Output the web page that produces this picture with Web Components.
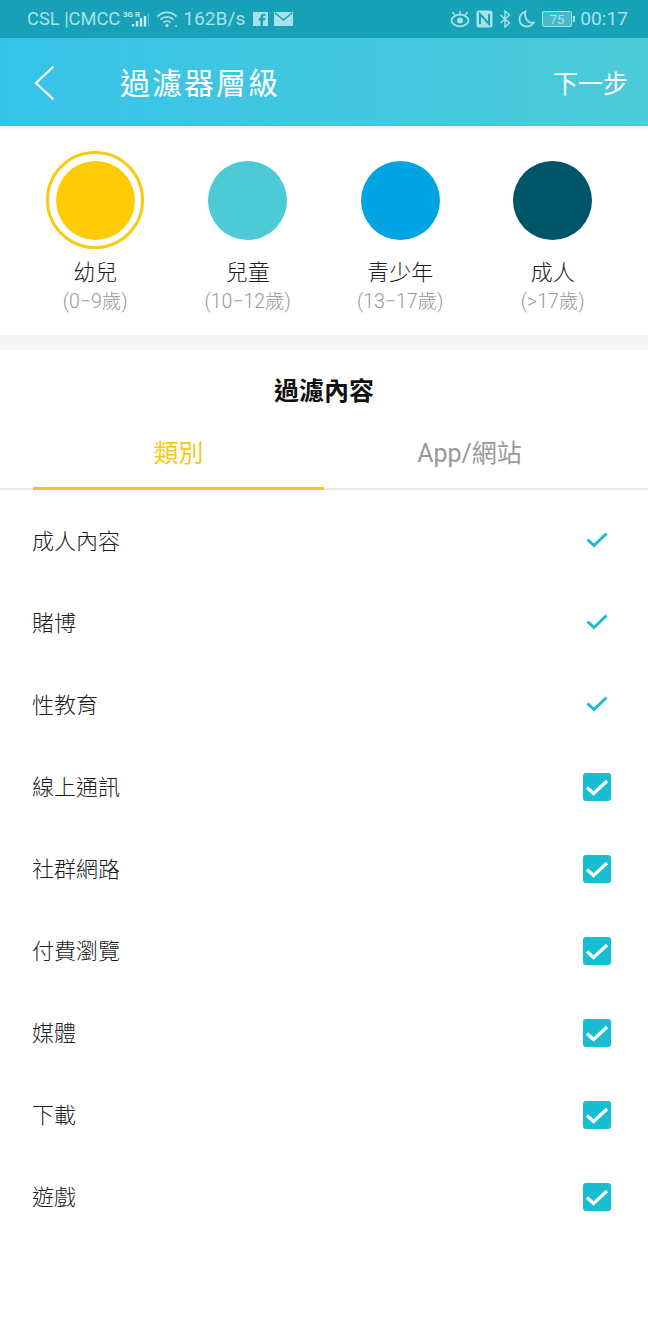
<!DOCTYPE html>
<html lang="zh-Hant"><head><meta charset="utf-8"><title>過濾器層級</title>
<style>
html,body{margin:0;padding:0;background:#fff}
body{width:648px;height:1332px;overflow:hidden;font-family:"Noto Sans CJK TC","Noto Sans",sans-serif}
</style></head><body>
<app-page></app-page>
<script>
const CJK='Roboto,"Noto Sans CJK TC",sans-serif';
function def(name,css,html){
  customElements.define(name,class extends HTMLElement{
    connectedCallback(){
      if(this.shadowRoot)return;
      const r=this.attachShadow({mode:'open'});
      r.innerHTML='<style>'+css+'</style>'+(typeof html==='function'?html(this):html);
    }
  });
}
def('status-bar',`:host{display:flex;align-items:center;justify-content:space-between;height:38px;padding:0 20px 0 27px;background:linear-gradient(90deg,#18a0b9,#17a3b7);color:#a6e2e8;font:400 19.200px/38px Roboto,sans-serif;box-sizing:border-box}
.g{display:flex;align-items:center}svg{display:block;fill:none}
.net{font-size:18.300px}`,
`<div class="g"><span class="net">CSL |CMCC</span>
<svg width="27" height="20" viewBox="0 0 27 20" style="margin-left:2px"><text x="1" y="7.500" font-family="Roboto" font-size="8" font-weight="700" fill="#c4edf0">3G R</text><path d="M11 15v2.500M15 12v5.500M19 9v8.500M23 7v10.500" stroke="#c4edf0" stroke-width="2.400"/><path d="M26.500 4v13.500" stroke="#a6e2e8" stroke-opacity=".5" stroke-width="1"/></svg>
<svg width="24" height="20" viewBox="0 0 24 20" style="margin:0 3px 0 7px"><path d="M1.500 7.500C7 2 15 2 20.500 7.500M4.500 10.500c3.800-3.500 9.200-3.500 13 0M7.500 13.500c2-1.800 5-1.800 7 0" stroke="#a6e2e8" stroke-width="1.800"/><circle cx="11" cy="16.500" r="1.700" fill="#a6e2e8"/><circle cx="20" cy="17" r="1" fill="#a6e2e8"/></svg>
<span>162B/s</span>
<svg width="15" height="14" viewBox="0 0 15 14" style="margin-left:8px"><path d="M0 0h15v14H10V8.500h2l.4-2.300H10V5c0-.8.300-1.200 1.200-1.200h1.200V1.700H10.500C8.500 1.700 7.500 3 7.500 4.800v1.400H5.700v2.300h1.800V14H0z" fill="#a6e2e8"/></svg>
<svg width="19" height="14" viewBox="0 0 19 14" style="margin-left:6px"><path d="M0 0h19v14H0z" fill="#a6e2e8"/><path d="M.8.800 9.500 8 18.200.800" stroke="#18a0b9" stroke-width="1.400"/></svg></div>
<div class="g">
<svg width="20" height="18" viewBox="0 0 20 18"><ellipse cx="10" cy="10.500" rx="8.500" ry="5.800" stroke="#a6e2e8" stroke-width="1.800"/><circle cx="10" cy="10.500" r="3" fill="#a6e2e8"/><path d="M2.500 2l3 4M17.500 2l-3 4M10 1v3" stroke="#a6e2e8" stroke-width="1.500"/></svg>
<svg width="17" height="18" viewBox="0 0 17 18" style="margin-left:6px"><rect x=".5" y=".5" width="16" height="17" rx="2.500" fill="#a6e2e8"/><path d="M4 14V4l9 10V4" stroke="#18a0b9" stroke-width="2"/></svg>
<svg width="12" height="18" viewBox="0 0 12 18" style="margin-left:6px"><path d="M1.500 5l9 8L6 17V1l4.500 4-9 8" stroke="#a6e2e8" stroke-width="1.400"/></svg>
<svg width="17" height="18" viewBox="0 0 17 18" style="margin-left:7px"><path d="M7.500 1.500C3.500 3 1.500 6 1.500 9.500c0 4 3.200 7 7 7 3 0 5.500-1.200 7-3.800-5 1-9.800-4.200-8-11.200z" stroke="#a6e2e8" stroke-width="1.800"/></svg>
<svg width="33" height="16" viewBox="0 0 33 16" style="margin-left:7px"><rect x=".5" y=".5" width="29" height="15" rx="1.500" fill="#a6e2e8" fill-opacity=".35" stroke="#a6e2e8"/><rect x="31" y="5" width="2" height="6" fill="#a6e2e8"/><text x="15" y="12.500" text-anchor="middle" font-family="Roboto" font-size="13" fill="#a6e2e8">75</text></svg>
<span style="margin-left:5px">00:17</span></div>`);
def('app-header',`:host{display:flex;align-items:center;height:88px;padding:0 20px 0 33px;box-sizing:border-box;background:linear-gradient(90deg,#36c3e8,#4ccbd8);color:#fff;box-shadow:0 1px 3px rgba(0,0,0,.12);position:relative}
svg{display:block;fill:none;margin-top:2px}h1{margin:4px 0 0 65px;font:400 30px/1 ${CJK};letter-spacing:2px;flex:1}
.n{margin-top:4px;font:400 25px/1 ${CJK}}`,
`<svg width="22" height="36" viewBox="0 0 22 36"><path d="M20.500 1.500 3 18l17.500 16.500" stroke="#fff" stroke-width="2.200"/></svg><h1>過濾器層級</h1><span class="n">下一步</span>`);
def('level-item',`:host{display:flex;flex-direction:column;align-items:center}
.w{width:98px;height:98px;border-radius:50%;display:flex;align-items:center;justify-content:center;box-sizing:border-box;border:3.500px solid transparent}
:host([selected]) .w{border-color:#f8ca12}
.c{width:79px;height:79px;flex:none;border-radius:50%;background:var(--c)}
.a{margin-top:11px;font:300 22px/26px ${CJK};color:#1c1c1c}
.b{margin-top:4px;font:300 19.500px/24px ${CJK};color:#999}`,
h=>`<div class="w"><div class="c" style="--c:${h.getAttribute('color')}"></div></div><div class="a">${h.getAttribute('name')}</div><div class="b">${h.getAttribute('age')}</div>`);
def('level-row',`:host{display:grid;grid-template-columns:repeat(4,1fr);height:209px;padding:25px 19px 0 19px;box-sizing:border-box;background:#fff}`,`<slot></slot>`);
def('filter-title',`:host{display:block;height:65px;text-align:center;font:700 25px/83px ${CJK};color:#111;background:#fff}`,`<slot></slot>`);
def('filter-tabs',`:host{display:flex;height:75px;padding:0 0 0 33px;box-sizing:border-box;border-bottom:2px solid #e8e8e8;position:relative}
div{flex:0 0 291px;text-align:center;font:400 25px/78px ${CJK};box-sizing:border-box;height:75px}
.on{color:#f5c71a;border-bottom:3px solid #f5c814}
.off{color:#999}`,
`<div class="on">類別</div><div class="off">App/網站</div>`);
def('filter-row',`:host{display:flex;align-items:center;justify-content:space-between;height:82px;padding:0 37px 0 32px;box-sizing:border-box;font:300 22px/1 ${CJK};color:#1c1c1c}
span{margin-top:2px}svg{display:block;fill:none}`,
h=>`<span>${h.getAttribute('label')}</span>`+(h.hasAttribute('locked')
?`<svg width="28" height="28" viewBox="0 0 28 28"><path d="M4.500 12.500l6.500 6L23.500 6.500" stroke="#17bdd1" stroke-width="3"/></svg>`
:`<svg width="28" height="28" viewBox="0 0 28 28"><rect width="28" height="28" rx="3" fill="#17bdd1"/><path d="M4 14.500l6.500 6L24 8" stroke="#fff" stroke-width="3.200"/></svg>`));
def('app-page',`:host{display:block;width:648px;height:1332px;background:#fff}
.gap{height:15px;background:#f5f5f5}.list{padding-top:10px}`,
`<status-bar></status-bar><app-header></app-header>
<level-row><level-item selected color="#ffcb05" name="幼兒" age="(0−9歲)"></level-item><level-item color="#4dcad6" name="兒童" age="(10−12歲)"></level-item><level-item color="#00a4e3" name="青少年" age="(13−17歲)"></level-item><level-item color="#005568" name="成人" age="(&gt;17歲)"></level-item></level-row>
<div class="gap"></div>
<filter-title>過濾內容</filter-title><filter-tabs></filter-tabs>
<div class="list">
<filter-row locked label="成人內容"></filter-row><filter-row locked label="賭博"></filter-row><filter-row locked label="性教育"></filter-row>
<filter-row label="線上通訊"></filter-row><filter-row label="社群網路"></filter-row><filter-row label="付費瀏覽"></filter-row><filter-row label="媒體"></filter-row><filter-row label="下載"></filter-row><filter-row label="遊戲"></filter-row></div>`);
</script></body></html>
